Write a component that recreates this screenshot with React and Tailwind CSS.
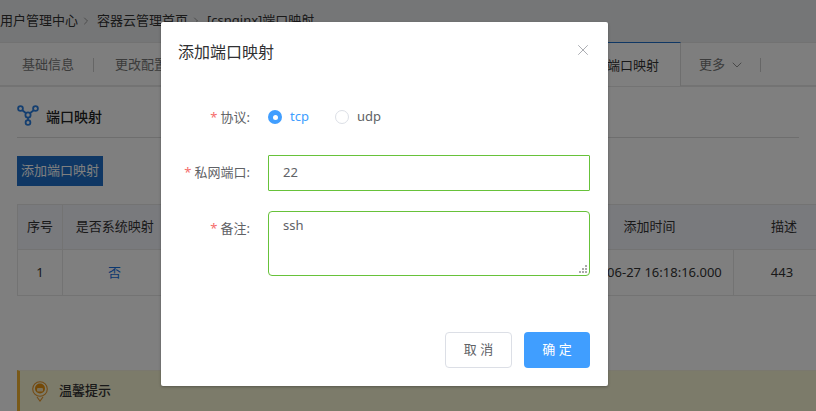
import { X, ChevronDown, ChevronRight } from "lucide-react";

const FONT = "font-['Noto_Sans','Noto_Sans_CJK_SC',sans-serif]";

function NetworkIcon() {
  return (
    <svg width="22" height="21" viewBox="0 0 22 21" fill="none" stroke="#2b7fe0" strokeWidth="1.8">
      <circle cx="3.5" cy="3.5" r="2.4" />
      <circle cx="18.5" cy="3.5" r="2.4" />
      <circle cx="11" cy="10" r="2.6" />
      <circle cx="11" cy="17.5" r="2.4" />
      <path d="M5.3 5.2l3.8 3.1M16.7 5.2l-3.8 3.1M11 12.6v2.5" />
    </svg>
  );
}

function BulbIcon() {
  return (
    <svg width="16" height="21" viewBox="0 0 16 21" fill="none">
      <circle cx="8" cy="8" r="7.3" stroke="#e8962a" strokeWidth="1.1" />
      <circle cx="8" cy="7.5" r="5" fill="#e8920f" />
      <rect x="5" y="7" width="6" height="3.5" rx="1" fill="#f7e2b5" />
      <path d="M5 16l3 4 3-4" stroke="#e8962a" strokeWidth="1.1" />
    </svg>
  );
}

function FormRow({ label, className, children }) {
  return (
    <div className={`flex ${className}`}>
      <div className="w-[89px] shrink-0 text-right text-[13px] leading-[34px] text-[#606266]">
        <span className="mr-[3px] text-[#f56c6c]">*</span>
        {label}:
      </div>
      <div className="ml-[18px] flex-1">{children}</div>
    </div>
  );
}

export default function App() {
  return (
    <div className={`relative h-[411px] w-[816px] overflow-hidden whitespace-nowrap bg-white text-[13px] ${FONT}`}>
      {/* page under the overlay */}
      <div className="flex h-[43px] items-center border-b border-[#e4e4e4] bg-[#ebedef] text-[#333]">
        <span>用户管理中心</span>
        <ChevronRight size={12} className="ml-[2px] mr-[5px] text-[#999]" />
        <span>容器云管理首页</span>
        <ChevronRight size={12} className="ml-[2px] mr-[5px] text-[#999]" />
        <span>[csnginx]端口映射</span>
      </div>
      <div className="flex h-[44px] items-center border-b-2 border-[#e6e6e6] bg-[#fcfcfc] pt-[2px] text-[#777]">
        <span className="ml-[22px]">基础信息</span>
        <span className="ml-[19px] h-[14px] w-px bg-[#ccc]" />
        <span className="ml-[21px]">更改配置</span>
        <div className="-mt-[2px] ml-[384px] flex h-[44px] w-[130px] items-center justify-end border-x border-t border-x-[#ddd] border-t-[#1e6fc8] bg-white pr-[21px] pt-[2px] text-[#333]">
          端口映射
        </div>
        <span className="ml-[18px]">更多</span>
        <ChevronDown size={16} strokeWidth={1.2} className="ml-[4px]" />
        <span className="ml-[15px] h-[14px] w-px bg-[#ccc]" />
      </div>
      <div className="mx-[17px] flex h-[51px] items-center border-b border-[#ddd] pt-[6px] text-sm font-medium text-[#222]">
        <NetworkIcon />
        <span className="ml-[7px] mt-[3px]">端口映射</span>
      </div>
      <div className="ml-[17px] mt-[18px] flex h-[30px] w-[86px] items-center justify-center bg-[#1e6fc8] text-white">
        添加端口映射
      </div>
      <table className="ml-[17px] mt-[18px] w-[818px] max-w-none table-fixed border-collapse text-center text-[#333]">
        <thead>
          <tr className="h-[45px] bg-[#f2f4fa]">
            <th className="w-[45px] border border-[#e6e6e6] font-normal">序号</th>
            <th className="w-[104px] border-y border-[#e6e6e6] font-normal">是否系统映射</th>
            <th className="w-[399px] border-y border-[#e6e6e6] font-normal"></th>
            <th className="w-[168px] border-y border-[#e6e6e6] font-normal">添加时间</th>
            <th className="border-y border-[#e6e6e6] font-normal">描述</th>
          </tr>
        </thead>
        <tbody>
          <tr className="h-[46px]">
            <td className="border border-[#e6e6e6]">1</td>
            <td className="border border-[#e6e6e6] text-[#1570e0]">否</td>
            <td className="border border-[#e6e6e6]"></td>
            <td className="border border-[#e6e6e6] pr-[4px]">2020-06-27 16:18:16.000</td>
            <td className="border border-[#e6e6e6] pr-[4px]">443</td>
          </tr>
        </tbody>
      </table>
      <div className="ml-[17px] mt-[74px] flex h-[50px] items-start border-l-[3px] border-t border-[#f2b233] border-t-[#f5f0dc] bg-[#f8f6d4] pl-[12px] pt-[10px] font-medium text-[#333]">
        <BulbIcon />
        <span className="ml-[11px]">温馨提示</span>
      </div>

      {/* overlay */}
      <div className="absolute inset-0 bg-black/50" />

      {/* dialog */}
      <div className="absolute left-[161px] top-[22px] h-[364px] w-[447px] rounded-[2px] bg-white shadow-[0_1px_3px_rgba(0,0,0,0.3)]">
        <div className="flex h-[42px] items-start justify-between pl-[17px] pr-[16px] pt-[18px]">
          <span className="text-base leading-6 text-[#303133]">添加端口映射</span>
          <X size={18} strokeWidth={1} className="mt-[1px] text-[#909399]" />
        </div>
        <FormRow label="协议" className="mt-[36px] h-[34px] items-center">
          <div className="flex items-center">
            <span className="flex h-[14px] w-[14px] items-center justify-center rounded-full bg-[#409eff]">
              <span className="h-[5px] w-[5px] rounded-full bg-white" />
            </span>
            <span className="ml-[8px] text-[#409eff]">tcp</span>
            <span className="ml-[26px] h-[14px] w-[14px] rounded-full border border-[#dcdfe6] bg-white" />
            <span className="ml-[8px] text-[#606266]">udp</span>
          </div>
        </FormRow>
        <FormRow label="私网端口" className="mt-[21px]">
          <div className="mr-[18px] flex h-[36px] items-center rounded-[1px] border border-[#67c23a] px-[14px] text-[#606266]">
            22
          </div>
        </FormRow>
        <FormRow label="备注" className="mt-[20px]">
          <div className="relative mr-[18px] h-[65px] rounded-[4px] border border-[#67c23a] px-[14px] pt-[3px] leading-[20px] text-[#606266]">
            ssh
            <svg width="10" height="10" viewBox="0 0 10 10" className="absolute bottom-[1px] right-[1px]" fill="#aaa">
              <rect x="7" y="1" width="2" height="2" />
              <rect x="4" y="4" width="2" height="2" />
              <rect x="7" y="4" width="2" height="2" />
              <rect x="1" y="7" width="2" height="2" />
              <rect x="4" y="7" width="2" height="2" />
              <rect x="7" y="7" width="2" height="2" />
            </svg>
          </div>
        </FormRow>
        <div className="mr-[18px] mt-[56px] flex justify-end gap-[12px]">
          <button className="h-[36px] w-[67px] rounded-[4px] border border-[#dcdfe6] bg-white text-[#606266]">取 消</button>
          <button className="h-[36px] w-[66px] rounded-[4px] bg-[#409eff] text-white">确 定</button>
        </div>
      </div>
    </div>
  );
}
